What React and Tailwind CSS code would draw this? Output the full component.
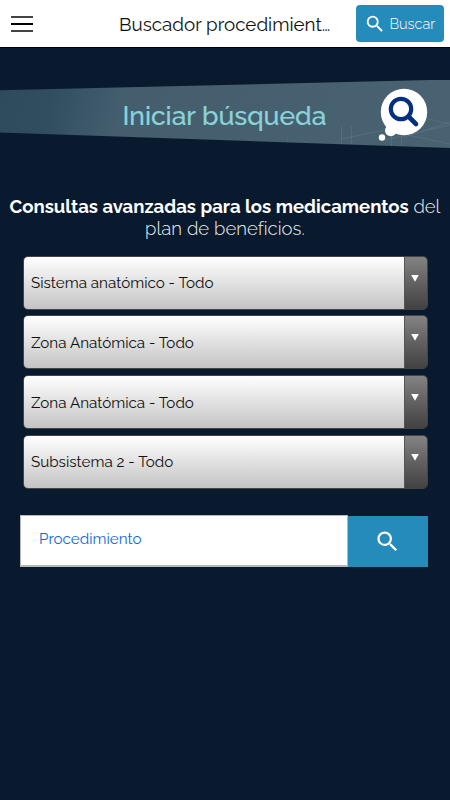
import React, { useState } from 'react'
import { MdSearch } from 'react-icons/md'

const FILTERS = [
  { id: 'sistema', label: 'Sistema anatómico - Todo' },
  { id: 'zona1', label: 'Zona Anatómica - Todo' },
  { id: 'zona2', label: 'Zona Anatómica - Todo' },
  { id: 'subsistema', label: 'Subsistema 2 - Todo' }
]

function Header() {
  return (
    <header className="flex h-12 shrink-0 items-center border-b border-black bg-white pl-[11px] pr-[6px]">
      <button className="flex w-[22px] flex-col gap-[5px]" aria-label="Menú">
        <span className="h-[2px] bg-[#444]" />
        <span className="h-[2px] bg-black" />
        <span className="h-[2px] bg-[#444]" />
      </button>
      <h1 className="ml-[86px] flex-1 whitespace-nowrap text-[18.8px] leading-6 text-[#111]">
        Buscador procedimient…
      </h1>
      <button className="flex h-[37px] w-[88px] items-center rounded-[4px] bg-[#258bbb] pl-[8px] text-white">
        <MdSearch size={22} className="shrink-0" />
        <span className="ml-[3.5px] text-[14.5px] font-light">Buscar</span>
      </button>
    </header>
  )
}

function SearchBubble() {
  return (
    <svg width="52" height="56" viewBox="0 0 52 56" className="block">
      <circle cx="27" cy="24" r="23.2" fill="#fff" />
      <circle cx="13.8" cy="42.5" r="5.8" fill="#fff" />
      <circle cx="5" cy="49.5" r="3.2" fill="#fff" />
      <circle cx="24" cy="21" r="10.2" fill="none" stroke="#00307f" strokeWidth="4.2" />
      <path d="M31.5 28.5 L39 36" stroke="#00307f" strokeWidth="4.6" strokeLinecap="round" />
    </svg>
  )
}

function Banner() {
  return (
    <section className="relative mt-8 h-[68px] shrink-0">
      <svg width="450" height="68" viewBox="0 0 450 68" className="absolute inset-0">
        <defs>
          <linearGradient id="band" x1="0" x2="1" y1="0" y2="0.03">
            <stop offset="0" stopColor="#2d4b5d" />
            <stop offset="0.12" stopColor="#304e60" />
            <stop offset="0.28" stopColor="#445e6e" />
            <stop offset="1" stopColor="#486272" />
          </linearGradient>
        </defs>
        <path d="M0 10.3 L450 -0.5 V68 L0 52.5 Z" fill="url(#band)" />
        <g fill="none" stroke="#6d8490" strokeWidth="0.6" opacity="0.6">
          <path d="M341.5 46 V64 M351.5 46 V64 M391.5 50 V66 M401.5 50 V66" />
          <path d="M287.5 54 V62" opacity="0.5" />
          <path d="M341 59 L385 50 L450 64 M385 60 L450 45 M402 58 L450 42 M425 38 L450 44" />
        </g>
      </svg>
      <h2 className="absolute left-[122.5px] top-5 whitespace-nowrap text-[26.4px] font-medium leading-8 text-[#8bd3d9] [-webkit-text-stroke:0.2px_#8bd3d9]">
        Iniciar búsqueda
      </h2>
      <div className="absolute left-[377px] top-[8px]">
        <SearchBubble />
      </div>
    </section>
  )
}

function FilterSelect({ label }) {
  return (
    <button className="flex h-[54px] w-full overflow-hidden rounded-[5px] border border-[#444] text-left">
      <span className="flex flex-1 items-center bg-linear-to-b from-white to-[#c4c4c4] pl-[7.5px] pt-[1.5px] text-[15.2px] text-[#111]">
        {label}
      </span>
      <span className="flex w-[23px] justify-center border-l border-[#555] bg-linear-to-b from-[#838383] to-[#424242] pr-[2px] pt-[18px]">
        <svg width="8" height="7" viewBox="0 0 8 7">
          <path d="M0.2 0 H7.8 L4 6.8 Z" fill="#fff" />
        </svg>
      </span>
    </button>
  )
}

function App() {
  const [query, setQuery] = useState('')

  return (
    <div className="flex h-[800px] w-[450px] flex-col overflow-hidden bg-[#091a2f] font-['Raleway','Lato',sans-serif]">
      <Header />
      <Banner />

      <p className="mt-[48px] whitespace-nowrap text-center text-[18.55px] leading-[22px] text-[#f2f2f2]">
        <b className="font-bold text-white">Consultas avanzadas para los medicamentos</b>{' '}
        <span className="font-light">del</span>
        <br />
        <span className="font-light tracking-[0.05px]">plan de beneficios.</span>
      </p>

      {/* Filters */}
      <div className="mt-[15.6px] flex flex-col gap-[5.8px] pl-[22.5px] pr-[22px]">
        {FILTERS.map((f) => (
          <FilterSelect key={f.id} label={f.label} />
        ))}
      </div>

      {/* Search box */}
      <form className="mt-[26px] flex pl-5 pr-[22px]" onSubmit={(e) => e.preventDefault()}>
        <input
          value={query}
          onChange={(e) => setQuery(e.target.value)}
          placeholder="Procedimiento"
          className="h-[52px] w-[328px] border border-b-2 border-[#b5b9b5] bg-white pb-[3px] pl-[18px] text-[15.2px] text-[#1268d8] outline-none placeholder:text-[#1268d8] placeholder:opacity-100"
        />
        <button className="mt-px grid h-[51px] flex-1 place-items-center bg-[#258bbb] pr-[2px] text-white" aria-label="Buscar">
          <MdSearch size={27} />
        </button>
      </form>
    </div>
  )
}

export default App
